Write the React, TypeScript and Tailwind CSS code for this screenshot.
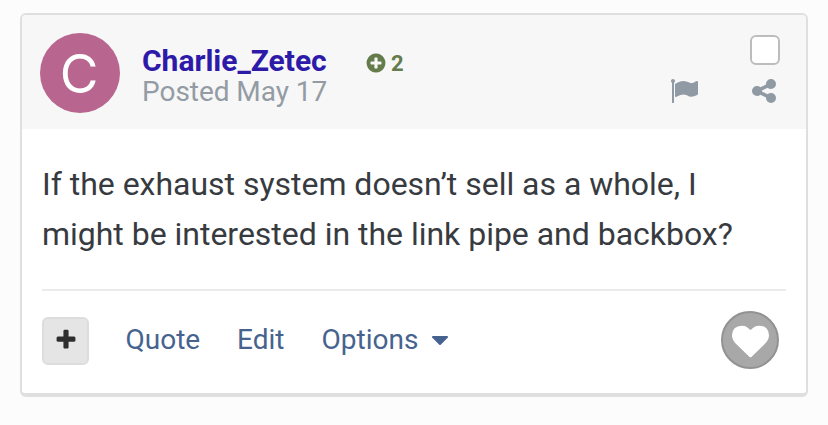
import React from 'react';

const glyphs = {
  flag: 'M320 256q0 72-64 110v1266q0 13-9.5 22.5t-22.5 9.5h-64q-13 0-22.5-9.5t-9.5-22.5v-1266q-64-38-64-110 0-53 37.5-90.5t90.5-37.5 90.5 37.5 37.5 90.5zm1472 64v763q0 25-12.5 38.5t-39.5 27.5q-215 116-369 116-61 0-123.5-22t-108.5-48-115.5-48-142.5-22q-192 0-464 146-17 9-33 9-26 0-45-19t-19-45v-742q0-32 31-55 21-14 79-43 236-120 421-120 107 0 200 29t219 88q38 19 88 19 54 0 117.5-21t110-47 88-47 54.5-21q26 0 45 19t19 45z',
  share: 'M1344 1024q133 0 226.5 93.5t93.5 226.5-93.5 226.5-226.5 93.5-226.5-93.5-93.5-226.5q0-12 2-34l-360-180q-92 86-218 86-133 0-226.5-93.5t-93.5-226.5 93.5-226.5 226.5-93.5q126 0 218 86l360-180q-2-22-2-34 0-133 93.5-226.5t226.5-93.5 226.5 93.5 93.5 226.5-93.5 226.5-226.5 93.5q-126 0-218-86l-360 180q2 22 2 34t-2 34l360 180q92-86 218-86z',
  plusCircle: 'M1344 960v-128q0-26-19-45t-45-19h-256v-256q0-26-19-45t-45-19h-128q-26 0-45 19t-19 45v256h-256q-26 0-45 19t-19 45v128q0 26 19 45t45 19h256v256q0 26 19 45t45 19h128q26 0 45-19t19-45v-256h256q26 0 45-19t19-45zm320-64q0 209-103 385.5t-279.5 279.5-385.5 103-385.5-103-279.5-279.5-103-385.5 103-385.5 279.5-279.5 385.5-103 385.5 103 279.5 279.5 103 385.5z',
  plus: 'M1600 736v192q0 40-28 68t-68 28h-416v416q0 40-28 68t-68 28h-192q-40 0-68-28t-28-68v-416h-416q-40 0-68-28t-28-68v-192q0-40 28-68t68-28h416v-416q0-40 28-68t68-28h192q40 0 68 28t28 68v416h416q40 0 68 28t28 68z',
  heart: 'M896 1664q-26 0-44-18l-624-602q-10-8-27.5-26t-55.5-65.5-68-97.5-53.5-121-23.5-138q0-220 127-344t351-124q62 0 126.5 21.5t120 58 95.5 68.5 76 68q36-36 76-68t95.5-68.5 120-58 126.5-21.5q224 0 351 124t127 344q0 221-229 450l-623 600q-18 18-44 18z',
  caret: 'M1408 704q0 26-19 45l-448 448q-19 19-45 19t-45-19l-448-448q-19-19-19-45t19-45 45-19h896q26 0 45 19t19 45z',
};

interface GlyphProps {
  name: keyof typeof glyphs;
  className?: string;
}

const Glyph: React.FC<GlyphProps> = ({ name, className }) => (
  <svg viewBox="0 0 1792 1792" fill="currentColor" className={className} aria-hidden="true">
    <path d={glyphs[name]} />
  </svg>
);

const PostHeader: React.FC = () => (
  <header className="flex h-[114px] bg-[#f7f7f7] pl-[18px] pt-[18px] pr-[26px]">
    <div className="flex h-20 w-20 shrink-0 items-center justify-center rounded-full bg-[#b8668f] pr-[2px] pt-[2px] font-['Inter',sans-serif] text-[53px] leading-none text-white">
      C
    </div>
    <div className="ml-[22px] pt-[12px]">
      <div className="flex h-[32px] items-center">
        <a href="#" className="w-[223px] text-[30px] font-bold leading-[32px] tracking-[-0.02px] text-[#2e1aa8]">Charlie_Zetec</a>
        <span className="flex items-center gap-1 pt-[4px] text-[22px] font-bold text-[#647b4c]">
          <Glyph name="plusCircle" className="h-[22px] w-[22px]" />
          2
        </span>
      </div>
      <p className="text-[28px] leading-[30px] tracking-[-0.04px] text-[#939ca4]">Posted May 17</p>
    </div>
    <div className="ml-auto flex flex-col items-end gap-3 pt-[2px]">
      <input type="checkbox" aria-label="Select post" className="h-[30px] w-[30px] appearance-none rounded-[6px] border-2 border-[#bdbdbd] bg-white" />
      <div className="flex gap-[51.5px] pr-[2.5px] text-[#8f9aa5]">
        <button aria-label="Report"><Glyph name="flag" className="h-7 w-7" /></button>
        <button aria-label="Share"><Glyph name="share" className="h-7 w-7" /></button>
      </div>
    </div>
  </header>
);

const PostControls: React.FC = () => (
  <footer className="mx-5 flex h-[100px] items-center border-t-2 border-[#ebebeb] text-[28px] text-[#46638f]">
    <button aria-label="Multiquote" className="mt-[2px] flex h-12 w-[47px] items-center justify-center rounded-[6px] border-2 border-[#dddddd] bg-[#e5e5e5] pb-[2px] text-[#2e2e2e]">
      <Glyph name="plus" className="h-6 w-6" />
    </button>
    <a href="#" className="ml-[36.5px] w-[111.5px]">Quote</a>
    <a href="#" className="w-[84.5px]">Edit</a>
    <a href="#" className="flex items-center">
      <span className="w-[104px]">Options</span>
      <Glyph name="caret" className="h-7 w-7" />
    </a>
    <button aria-label="Like" className="ml-auto mr-[7px] flex h-[58px] w-[58px] items-center justify-center rounded-full border-2 border-[#929292] bg-[#a8a8a8] pt-[3px] text-white">
      <Glyph name="heart" className="h-[37px] w-[37px]" />
    </button>
  </footer>
);

const App: React.FC = () => {
  return (
    <div className="h-[425px] w-[828px] bg-[#fcfcfc] pl-5 pt-[13px] font-['Roboto',sans-serif]">
      <article className="h-[384px] w-[788px] overflow-hidden rounded-[6px] border-2 border-b-4 border-[#dfdfdf] bg-white">
        <PostHeader />
        <div className="h-[160px] px-5 pt-[30px] text-[32px] leading-[50px] tracking-[-0.02px] text-[#373b3f]">
          <p className="whitespace-nowrap">If the exhaust system doesn’t sell as a whole, I<br />might be interested in the link pipe and backbox?</p>
        </div>
        <PostControls />
      </article>
    </div>
  );
};

export default App;
